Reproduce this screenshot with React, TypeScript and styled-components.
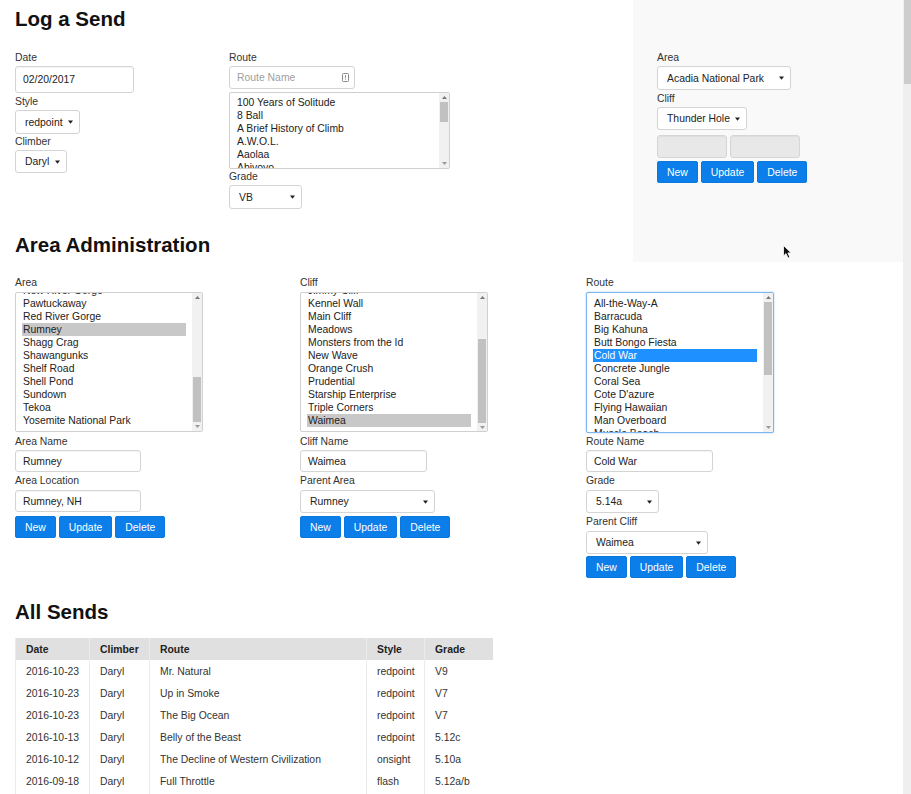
import React from 'react';
import styled, { createGlobalStyle } from 'styled-components';

const GlobalStyle = createGlobalStyle`
  html, body { margin: 0; padding: 0; background: #fff; overflow: hidden; }
  body {
    font-family: "Liberation Sans", Arial, Helvetica, sans-serif;
    font-size: 10.4px;
    color: #333;
  }
  * { box-sizing: border-box; }
`;

const Viewport = styled.div`
  display: flex;
  width: 911px;
  height: 794px;
  overflow: hidden;
`;

const Page = styled.div`
  flex: 1;
  min-width: 0;
  height: 100%;
  overflow: hidden;
`;

const WinScroll = styled.div`
  width: 8px;
  height: 100%;
  background: #efefef;
  display: flex;
  flex-direction: column;
  align-items: flex-end;
`;

const WinThumb = styled.div`
  width: 7px;
  height: 84px;
  background: #cdcdcd;
`;

const TopRow = styled.div`
  display: flex;
  align-items: flex-start;
`;

const LeftCol = styled.div`
  width: 633px;
  flex-shrink: 0;
  padding-left: 15px;
`;

const Title = styled.h2<{ $mt: number; $mb: number }>`
  margin: ${(p) => p.$mt}px 0 ${(p) => p.$mb}px;
  font-size: 20.5px;
  line-height: 24px;
  font-weight: bold;
  color: #111;
`;

const LogGrid = styled.div`
  display: flex;
  align-items: flex-start;
`;

const FieldCol = styled.div<{ $w?: number }>`
  display: flex;
  flex-direction: column;
  align-items: flex-start;
  width: ${(p) => (p.$w ? `${p.$w}px` : 'auto')};
  flex-shrink: 0;
`;

const Field = styled.div<{ $mt?: number }>`
  display: flex;
  flex-direction: column;
  align-items: flex-start;
  margin-top: ${(p) => p.$mt ?? 0}px;
`;

const Label = styled.label<{ $mb?: number }>`
  display: block;
  line-height: 15px;
  margin-bottom: ${(p) => p.$mb ?? 1}px;
  color: #333;
`;

const TextInput = styled.input<{ $w: number; $h: number }>`
  width: ${(p) => p.$w}px;
  height: ${(p) => p.$h}px;
  border: 1px solid #d4d4d4;
  border-radius: 3px;
  padding: 0 7px;
  font: inherit;
  color: #222;
  background: #fff;
  outline: none;
  box-shadow: inset 0 1px 1px rgba(0, 0, 0, 0.04);
`;

const DisabledInput = styled(TextInput)`
  background: #e8e8e8;
  border-color: #d6d6d6;
`;

const InputWrap = styled.div<{ $w: number; $h: number }>`
  display: flex;
  align-items: center;
  width: ${(p) => p.$w}px;
  height: ${(p) => p.$h}px;
  border: 1px solid #d4d4d4;
  border-radius: 3px;
  padding: 0 5px 0 7px;
  background: #fff;
`;

const BareInput = styled.input`
  flex: 1;
  min-width: 0;
  border: none;
  padding: 0;
  font: inherit;
  color: #222;
  background: transparent;
  outline: none;
  &::placeholder { color: #a0a0a0; }
`;

const SelectBox = styled.div<{ $w: number; $h: number }>`
  display: flex;
  align-items: center;
  width: ${(p) => p.$w}px;
  height: ${(p) => p.$h}px;
  border: 1px solid #d4d4d4;
  border-radius: 3px;
  background: #fff;
  padding: 0 6px 0 9px;
  gap: 4px;
`;

const NativeSelect = styled.select`
  appearance: none;
  -webkit-appearance: none;
  flex: 1;
  min-width: 0;
  border: none;
  background: transparent;
  font: inherit;
  color: #222;
  padding: 0;
  outline: none;
`;

const Row = styled.div<{ $gap: number; $mt?: number }>`
  display: flex;
  gap: ${(p) => p.$gap}px;
  margin-top: ${(p) => p.$mt ?? 0}px;
`;

const Btn = styled.button`
  height: 22px;
  padding: 0 9px;
  background: #0b7ee9;
  color: #fff;
  border: 1px solid #0a78de;
  border-radius: 2px;
  font: inherit;
  cursor: pointer;
`;

const Panel = styled.div`
  position: relative;
  width: 270px;
  height: 262px;
  flex-shrink: 0;
  background: #f9f9f9;
  padding: 50px 0 0 24px;
`;

const Cursor = styled.svg`
  position: absolute;
  left: 150px;
  top: 245px;
`;

const AdminGrid = styled.div`
  display: grid;
  grid-template-columns: 285px 286px 1fr;
  align-items: start;
  padding-left: 15px;
  margin-top: 13px;
`;

const ListFrame = styled.div<{ $w: number; $h: number; $focus?: boolean }>`
  display: flex;
  width: ${(p) => p.$w}px;
  height: ${(p) => p.$h}px;
  border: 1px solid ${(p) => (p.$focus ? '#7db5ee' : '#d0d0d0')};
  border-radius: 2px;
  background: #fff;
  overflow: hidden;
  box-shadow: ${(p) => (p.$focus ? '0 0 2px rgba(80, 150, 230, 0.5)' : 'none')};
`;

const ListViewport = styled.div`
  flex: 1;
  min-width: 0;
  overflow: hidden;
  padding: 0 6px;
`;

const ListItems = styled.ul<{ $offset: number }>`
  list-style: none;
  margin: ${(p) => p.$offset}px 0 0;
  padding: 0;
`;

const ListItem = styled.li<{ $state?: 'active' | 'inactive' }>`
  height: 13px;
  line-height: 13px;
  padding: 0 1px;
  white-space: nowrap;
  overflow: hidden;
  color: ${(p) => (p.$state === 'active' ? '#fff' : '#222')};
  background: ${(p) =>
    p.$state === 'active' ? '#1e90ff' : p.$state === 'inactive' ? '#c8c8c8' : 'transparent'};
`;

const ListScroll = styled.div`
  width: 10px;
  flex-shrink: 0;
  background: #f1f1f1;
  display: flex;
  flex-direction: column;
`;

const ScrollArrow = styled.div`
  height: 9px;
  flex-shrink: 0;
  display: flex;
  align-items: center;
  justify-content: center;
`;

const ScrollRail = styled.div<{ $pad: number }>`
  flex: 1;
  padding: ${(p) => p.$pad}px 1px 0;
`;

const ListThumb = styled.div<{ $h: number }>`
  height: ${(p) => p.$h}px;
  background: #c1c1c1;
`;

const SendsWrap = styled.div`
  padding-left: 15px;
`;

const SendsTable = styled.table`
  border-collapse: collapse;
  table-layout: fixed;
  width: 477px;
`;

const Th = styled.th`
  height: 22px;
  background: #e0e0e0;
  text-align: left;
  padding: 0 0 0 10px;
  font-weight: bold;
  color: #222;
  border-left: 1px solid #ebebeb;
`;

const Td = styled.td`
  height: 22px;
  padding: 0 0 0 10px;
  color: #333;
  white-space: nowrap;
  border-left: 1px solid #ebebeb;
`;

const Caret = () => (
  <svg width="5" height="4" viewBox="0 0 5 4">
    <path d="M0 0.5 L5 0.5 L2.5 3.8 Z" fill="#222" />
  </svg>
);

const Select = ({ w, h, value }: { w: number; h: number; value: string }) => (
  <SelectBox $w={w} $h={h}>
    <NativeSelect defaultValue={value}>
      <option>{value}</option>
    </NativeSelect>
    <Caret />
  </SelectBox>
);

const CardIcon = () => (
  <svg width="7" height="9" viewBox="0 0 7 9">
    <rect x="0.5" y="0.5" width="6" height="8" rx="1" fill="none" stroke="#8a8a8a" />
    <rect x="3" y="2.2" width="1" height="2.6" fill="#8a8a8a" />
    <rect x="3" y="5.6" width="1" height="1" fill="#8a8a8a" />
  </svg>
);

type ListProps = {
  items: string[];
  selected?: string;
  active?: boolean;
  focus?: boolean;
  offset: number;
  w: number;
  h: number;
  thumbTop: number;
  thumbH: number;
};

const ListBox = ({ items, selected, active, focus, offset, w, h, thumbTop, thumbH }: ListProps) => (
  <ListFrame $w={w} $h={h} $focus={focus}>
    <ListViewport>
      <ListItems $offset={offset}>
        {items.map((it) => (
          <ListItem key={it} $state={it === selected ? (active ? 'active' : 'inactive') : undefined}>
            {it}
          </ListItem>
        ))}
      </ListItems>
    </ListViewport>
    <ListScroll>
      <ScrollArrow>
        <svg width="5" height="3" viewBox="0 0 5 3">
          <path d="M0 3 L5 3 L2.5 0 Z" fill="#777" />
        </svg>
      </ScrollArrow>
      <ScrollRail $pad={Math.max(0, thumbTop - 10)}>
        <ListThumb $h={thumbH} />
      </ScrollRail>
      <ScrollArrow>
        <svg width="5" height="3" viewBox="0 0 5 3">
          <path d="M0 0 L5 0 L2.5 3 Z" fill="#999" />
        </svg>
      </ScrollArrow>
    </ListScroll>
  </ListFrame>
);

const Buttons = ({ mt }: { mt: number }) => (
  <Row $gap={3} $mt={mt}>
    <Btn>New</Btn>
    <Btn>Update</Btn>
    <Btn>Delete</Btn>
  </Row>
);

const logRoutes = ['100 Years of Solitude', '8 Ball', 'A Brief History of Climb', 'A.W.O.L.', 'Aaolaa', 'Abiyoyo'];
const areas = [
  'New River Gorge', 'Pawtuckaway', 'Red River Gorge', 'Rumney', 'Shagg Crag', 'Shawangunks',
  'Shelf Road', 'Shell Pond', 'Sundown', 'Tekoa', 'Yosemite National Park',
];
const cliffs = [
  'Jimmy Cliff', 'Kennel Wall', 'Main Cliff', 'Meadows', 'Monsters from the Id', 'New Wave',
  'Orange Crush', 'Prudential', 'Starship Enterprise', 'Triple Corners', 'Waimea',
];
const routes = [
  'All-the-Way-A', 'Barracuda', 'Big Kahuna', 'Butt Bongo Fiesta', 'Cold War', 'Concrete Jungle',
  'Coral Sea', "Cote D'azure", 'Flying Hawaiian', 'Man Overboard', 'Muscle Beach',
];

const sends = [
  ['2016-10-23', 'Daryl', 'Mr. Natural', 'redpoint', 'V9'],
  ['2016-10-23', 'Daryl', 'Up in Smoke', 'redpoint', 'V7'],
  ['2016-10-23', 'Daryl', 'The Big Ocean', 'redpoint', 'V7'],
  ['2016-10-13', 'Daryl', 'Belly of the Beast', 'redpoint', '5.12c'],
  ['2016-10-12', 'Daryl', 'The Decline of Western Civilization', 'onsight', '5.10a'],
  ['2016-09-18', 'Daryl', 'Full Throttle', 'flash', '5.12a/b'],
  ['2016-09-18', 'Daryl', 'Cold War', 'redpoint', '5.14a'],
];

export default function App() {
  return (
    <>
      <GlobalStyle />
      <Viewport>
        <Page>
          <TopRow>
            <LeftCol>
              <Title $mt={7} $mb={19}>Log a Send</Title>
              <LogGrid>
                <FieldCol $w={214}>
                  <Field>
                    <Label $mb={1}>Date</Label>
                    <TextInput $w={119} $h={27} defaultValue="02/20/2017" />
                  </Field>
                  <Field $mt={1}>
                    <Label>Style</Label>
                    <Select w={65} h={24} value="redpoint" />
                  </Field>
                  <Field>
                    <Label>Climber</Label>
                    <Select w={52} h={23} value="Daryl" />
                  </Field>
                </FieldCol>
                <FieldCol>
                  <Field>
                    <Label $mb={1}>Route</Label>
                    <InputWrap $w={126} $h={23}>
                      <BareInput placeholder="Route Name" />
                      <CardIcon />
                    </InputWrap>
                  </Field>
                  <Field $mt={3}>
                    <ListBox items={logRoutes} offset={3} w={221} h={77} thumbTop={10} thumbH={20} />
                  </Field>
                  <Field>
                    <Label>Grade</Label>
                    <Select w={73} h={24} value="VB" />
                  </Field>
                </FieldCol>
              </LogGrid>
              <Title $mt={24} $mb={3}>Area Administration</Title>
            </LeftCol>
            <Panel>
              <Field>
                <Label $mb={1}>Area</Label>
                <Select w={134} h={24} value="Acadia National Park" />
              </Field>
              <Field $mt={1}>
                <Label>Cliff</Label>
                <Select w={90} h={23} value="Thunder Hole" />
              </Field>
              <Row $gap={3} $mt={5}>
                <DisabledInput $w={70} $h={23} disabled />
                <DisabledInput $w={70} $h={23} disabled />
              </Row>
              <Buttons mt={3} />
              <Cursor width="10" height="14" viewBox="0 0 10 14">
                <path d="M0.5 0.5 L0.5 11 L3 8.6 L5 13 L6.8 12.2 L4.9 7.9 L8.2 7.9 Z" fill="#111" stroke="#fff" strokeWidth="0.8" />
              </Cursor>
            </Panel>
          </TopRow>

          <AdminGrid>
            <FieldCol>
              <Field>
                <Label $mb={2}>Area</Label>
                <ListBox items={areas} selected="Rumney" offset={-9} w={188} h={140} thumbTop={85} thumbH={45} />
              </Field>
              <Field $mt={2}>
                <Label>Area Name</Label>
                <TextInput $w={126} $h={22} defaultValue="Rumney" />
              </Field>
              <Field $mt={1}>
                <Label $mb={2}>Area Location</Label>
                <TextInput $w={126} $h={22} defaultValue="Rumney, NH" />
              </Field>
              <Buttons mt={4} />
            </FieldCol>
            <FieldCol>
              <Field>
                <Label $mb={2}>Cliff</Label>
                <ListBox items={cliffs} selected="Waimea" offset={-9} w={188} h={140} thumbTop={47} thumbH={84} />
              </Field>
              <Field $mt={2}>
                <Label>Cliff Name</Label>
                <TextInput $w={127} $h={22} defaultValue="Waimea" />
              </Field>
              <Field $mt={1}>
                <Label $mb={2}>Parent Area</Label>
                <Select w={135} h={23} value="Rumney" />
              </Field>
              <Buttons mt={3} />
            </FieldCol>
            <FieldCol>
              <Field>
                <Label $mb={2}>Route</Label>
                <ListBox items={routes} selected="Cold War" active focus offset={4} w={188} h={141} thumbTop={10} thumbH={73} />
              </Field>
              <Field $mt={1}>
                <Label>Route Name</Label>
                <TextInput $w={127} $h={22} defaultValue="Cold War" />
              </Field>
              <Field $mt={1}>
                <Label $mb={2}>Grade</Label>
                <Select w={73} h={23} value="5.14a" />
              </Field>
              <Field $mt={1}>
                <Label $mb={2}>Parent Cliff</Label>
                <Select w={122} h={23} value="Waimea" />
              </Field>
              <Buttons mt={2} />
            </FieldCol>
          </AdminGrid>

          <SendsWrap>
            <Title $mt={22} $mb={14}>All Sends</Title>
            <SendsTable>
              <colgroup>
                <col style={{ width: 74 }} />
                <col style={{ width: 60 }} />
                <col style={{ width: 217 }} />
                <col style={{ width: 58 }} />
                <col style={{ width: 68 }} />
              </colgroup>
              <thead>
                <tr>
                  <Th>Date</Th>
                  <Th>Climber</Th>
                  <Th>Route</Th>
                  <Th>Style</Th>
                  <Th>Grade</Th>
                </tr>
              </thead>
              <tbody>
                {sends.map((r, i) => (
                  <tr key={i}>
                    {r.map((c, j) => (
                      <Td key={j}>{c}</Td>
                    ))}
                  </tr>
                ))}
              </tbody>
            </SendsTable>
          </SendsWrap>
        </Page>
        <WinScroll>
          <WinThumb />
        </WinScroll>
      </Viewport>
    </>
  );
}
